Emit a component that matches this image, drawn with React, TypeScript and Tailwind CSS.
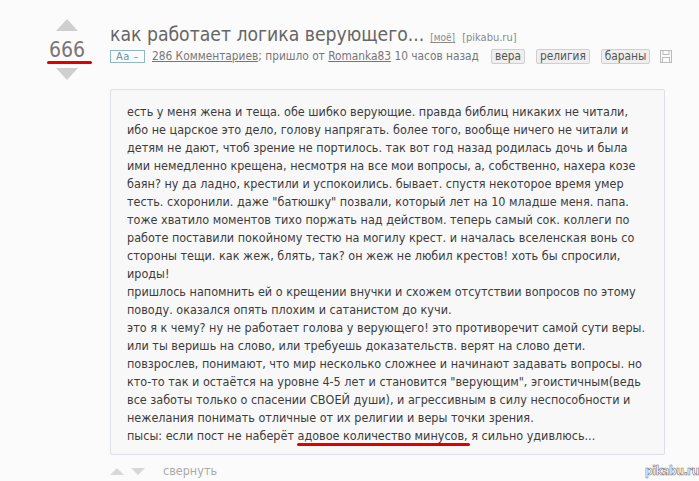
import React from "react";

const lines = [
  "есть у меня жена и теща. обе шибко верующие. правда библиц никаких не читали,",
  "ибо не царское это дело, голову напрягать. более того, вообще ничего не читали и",
  "детям не дают, чтоб зрение не портилось. так вот год назад родилась дочь и была",
  "ими немедленно крещена, несмотря на все мои вопросы, а, собственно, нахера козе",
  "баян? ну да ладно, крестили и успокоились. бывает. спустя некоторое время умер",
  "тесть. схоронили. даже \"батюшку\" позвали, который лет на 10 младше меня. папа.",
  "тоже хватило моментов тихо поржать над действом. теперь самый сок. коллеги по",
  "работе поставили покойному тестю на могилу крест. и началась вселенская вонь со",
  "стороны тещи. как жеж, блять, так? он жеж не любил крестов! хоть бы спросили,",
  "ироды!",
  "пришлось напомнить ей о крещении внучки и схожем отсутствии вопросов по этому",
  "поводу. оказался опять плохим и сатанистом до кучи.",
  "это я к чему? ну не работает голова у верующего! это противоречит самой сути веры.",
  "или ты веришь на слово, или требуешь доказательств. верят на слово дети.",
  "повзрослев, понимают, что мир несколько сложнее и начинают задавать вопросы. но",
  "кто-то так и остаётся на уровне 4-5 лет и становится \"верующим\", эгоистичным(ведь",
  "все заботы только о спасении СВОЕЙ души), и агрессивным в силу неспособности и",
  "нежелания понимать отличные от их религии и веры точки зрения.",
];

function Up({ cls }: { cls: string }) {
  return (
    <svg width="22" height="12" viewBox="0 0 22 12" className={cls}>
      <polygon points="11,0 22,12 0,12" fill="#cfcfcf" />
    </svg>
  );
}
function Down({ cls }: { cls: string }) {
  return (
    <svg width="22" height="12" viewBox="0 0 22 12" className={cls}>
      <polygon points="0,0 22,0 11,12" fill="#cfcfcf" />
    </svg>
  );
}

function Tag({ t }: { t: string }) {
  return (
    <span className="h-[15px] px-[3px] leading-[13px] text-[11.8px] text-[#555] bg-[#efefef] border border-[#cfcfcf] rounded-[2px]">
      {t}
    </span>
  );
}

export default function App() {
  const font = "font-['DejaVu_Sans_Condensed','DejaVu_Sans',sans-serif]";
  return (
    <div className={`w-[699px] h-[481px] bg-[#fbfbfb] overflow-hidden ${font}`}>
      <div className="flex">
        {/* vote column */}
        <div className="w-[110px] flex flex-col items-center pt-[19px] pl-[24px]">
          <Up cls="block" />
          <div className="text-[21px] leading-[24px] text-[#777] mt-[7px]">666</div>
          <div className="w-[45px] h-[3px] bg-[#e00000] rounded-full mt-[-1px] ml-[4px]" />
          <Down cls="block mt-[4px]" />
        </div>
        {/* content */}
        <div className="flex flex-col pt-[23px]">
          <div className="flex items-baseline whitespace-nowrap h-[24px]">
            <span className="text-[19.2px] leading-[24px] text-[#666]">как работает логика верующего...</span>
            <span className="ml-[6px] text-[10px] text-[#8a8a8a] underline">[моё]</span>
            <span className="ml-[7px] text-[11px] text-[#8a8a8a]">[pikabu.ru]</span>
          </div>
          <div className="flex items-center h-[15px] mt-[2px] whitespace-nowrap text-[11.8px] leading-[15px] text-[#777]">
            <span className="h-[13px] w-[35px] border border-[#8fb6c9] text-[#5f95ae] text-[11px] leading-[11px] flex items-center justify-center tracking-[0.5px]">
              Aa –
            </span>
            <span className="ml-[7px] underline">286 Комментариев</span>
            <span>; пришло от&nbsp;</span>
            <span className="underline">Romanka83</span>
            <span>&nbsp;10 часов назад</span>
            <div className="flex gap-[11px] ml-[12px]">
              <Tag t="вера" />
              <Tag t="религия" />
              <Tag t="бараны" />
            </div>
            <svg width="12" height="13" viewBox="0 0 12 13" className="ml-[10px]">
              <rect x="0.5" y="0.5" width="11" height="12" fill="none" stroke="#bbb" />
              <rect x="3" y="0.5" width="6" height="4" fill="none" stroke="#bbb" />
              <rect x="2.5" y="7.5" width="7" height="5" fill="none" stroke="#bbb" />
            </svg>
          </div>
          <div className="mt-[25px] w-[555px] bg-[#f8f8f8] border border-[#dde1e5] rounded-[2px] pl-[16px] pt-[13px] pb-[9px] text-[12.5px] leading-[18px] text-[#3c3c3c] whitespace-nowrap">
            {lines.map((l, i) => (
              <div key={i}>{l}</div>
            ))}
            <div>
              пысы: если пост не наберёт{" "}
              <span className="relative">
                адовое количество минусов
                <span className="absolute left-[-1px] right-[-6px] bottom-[-3px] h-[3px] bg-[#e00000] rounded-full" />
              </span>
              , я сильно удивлюсь...
            </div>
          </div>
          <div className="flex items-center mt-[9px] justify-between w-[589px]">
            <div className="flex items-center">
              <svg width="14" height="7" viewBox="0 0 14 7"><polygon points="7,0 14,7 0,7" fill="#d8d8d8" /></svg>
              <svg width="14" height="7" viewBox="0 0 14 7" className="ml-[7px]"><polygon points="0,0 14,0 7,7" fill="#d8d8d8" /></svg>
              <span className="ml-[18px] text-[12.5px] text-[#aaa] leading-[14px]">свернуть</span>
            </div>
            <span className="text-[12px] font-bold text-white tracking-[-0.5px] [-webkit-text-stroke:0.6px_#777] leading-[14px]">pikabu.ru</span>
          </div>
        </div>
      </div>
    </div>
  );
}
